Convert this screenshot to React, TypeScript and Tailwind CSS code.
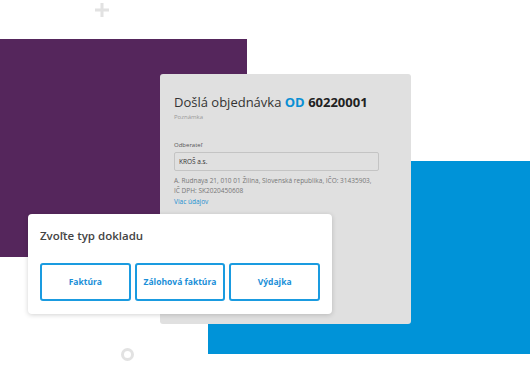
const font = { fontFamily: '"Open Sans", "Noto Sans", sans-serif' };

function OrderCard() {
  return (
    <div className="absolute left-[160px] top-[74px] h-[250px] w-[251px] rounded-[3px] bg-[#e0e0e0] px-[14px] pt-[20px]">
      <h1 className="text-[13px] leading-[17px] text-[#333]">
        Došlá objednávka <span className="font-bold text-[#0a8fd4]">OD</span>{' '}
        <span className="font-bold text-[#222]">60220001</span>
      </h1>
      <p className="mt-[2px] text-[6px] leading-[9px] text-[#999]">Poznámka</p>
      <p className="mt-[19px] text-[6px] leading-[9px] text-[#555]">Odberateľ</p>
      <div className="mt-[2px] flex h-[19px] w-[205px] items-center rounded-[2px] border border-[#c4c4c4] px-[4px] text-[6.5px] text-[#333]">
        KROŠ a.s.
      </div>
      <p className="mt-[5px] text-[6.5px] leading-[10px] text-[#777]">
        A. Rudnaya 21, 010 01 Žilina, Slovenská republika, IČO: 31435903,
        <br />
        IČ DPH: SK2020450608
      </p>
      <p className="mt-[1px] text-[6.5px] leading-[10px] text-[#1a8fd0]">Viac údajov</p>
    </div>
  );
}

function TypePicker() {
  const types = ['Faktúra', 'Zálohová faktúra', 'Výdajka'];
  return (
    <div className="absolute left-[28px] top-[214px] w-[304px] rounded-[4px] bg-white px-[12px] pb-[13px] pt-[15px] shadow-[0_1px_5px_rgba(0,0,0,0.18)]">
      <h2 className="text-[11.5px] font-semibold leading-[14px] text-[#444]">Zvoľte typ dokladu</h2>
      <div className="mt-[20px] grid grid-cols-3 gap-[4px]">
        {types.map((t) => (
          <button
            key={t}
            className="flex h-[38px] items-center justify-center rounded-[3px] border-2 border-[#1a9be0] bg-white text-[8.5px] font-bold text-[#1a8fd8]"
          >
            {t}
          </button>
        ))}
      </div>
    </div>
  );
}

export default function App() {
  return (
    <div className="relative h-[390px] w-[530px] overflow-hidden bg-white" style={font}>
      <svg className="absolute left-[94px] top-[2px]" width="16" height="16" viewBox="0 0 16 16">
        <path d="M8 1v14M1 8h14" stroke="#e2e2e2" strokeWidth="3" />
      </svg>
      <div className="absolute left-0 top-[39px] h-[218px] w-[247px] bg-[#55265c]" />
      <div className="absolute left-[208px] top-[161px] h-[193px] w-[322px] bg-[#0093d8]" />
      <OrderCard />
      <TypePicker />
      <div className="absolute left-[121px] top-[348px] h-[13px] w-[13px] rounded-full border-[3px] border-[#e2e2e2]" />
    </div>
  );
}
